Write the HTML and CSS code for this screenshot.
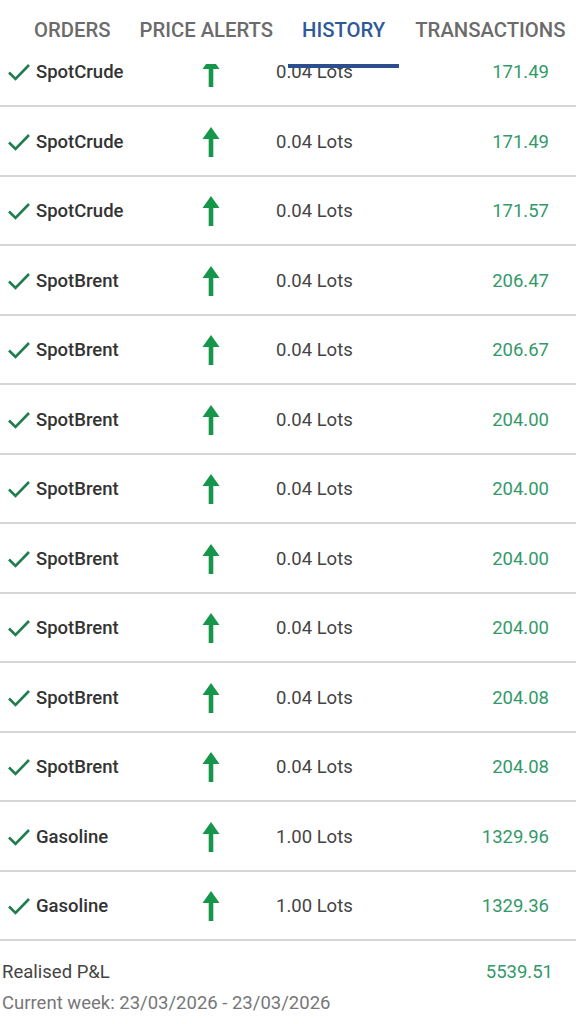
FILE: index.html
```html
<!DOCTYPE html>
<html lang="en">
<head>
    <meta charset="UTF-8">
    <meta name="viewport" content="width=device-width, initial-scale=1.0">
    <title>History</title>
    <link rel="stylesheet" href="styles.css">
</head>
<body>
    <!-- Abas -->
    <div class="tabs">
        <span class="edge"></span>
        <span class="tab">ORDERS</span>
        <span class="tab">PRICE ALERTS</span>
        <span class="tab active">HISTORY</span>
        <span class="tab">TRANSACTIONS</span>
        <span class="indicator"></span>
    </div>

    <!-- Lista de operações -->
    <div class="viewport">
        <div class="rows" id="rows"></div>
    </div>

    <div class="summary">
        <div class="summary-line">
            <span class="summary-label">Realised P&amp;L</span>
            <span class="price">5539.51</span>
        </div>
        <div class="period">Current week: 23/03/2026 - 23/03/2026</div>
    </div>

    <script>
        const trades = [
            ['SpotCrude', '0.04', '171.49'],
            ['SpotCrude', '0.04', '171.49'],
            ['SpotCrude', '0.04', '171.57'],
            ['SpotBrent', '0.04', '206.47'],
            ['SpotBrent', '0.04', '206.67'],
            ['SpotBrent', '0.04', '204.00'],
            ['SpotBrent', '0.04', '204.00'],
            ['SpotBrent', '0.04', '204.00'],
            ['SpotBrent', '0.04', '204.00'],
            ['SpotBrent', '0.04', '204.08'],
            ['SpotBrent', '0.04', '204.08'],
            ['Gasoline', '1.00', '1329.96'],
            ['Gasoline', '1.00', '1329.36']
        ];

        const check = '<svg class="check" viewBox="0 0 24 18" width="24" height="18"><path d="M2 9.5l6.5 6.5L22 2" fill="none" stroke="#1f7d4f" stroke-width="2.6"/></svg>';
        const arrow = '<svg class="arrow" viewBox="0 0 18 30" width="18" height="30"><path d="M9 0L17.5 12H11.3V30H6.7V12H0.5Z" fill="#16964a"/></svg>';

        document.getElementById('rows').innerHTML = trades.map(t => `
            <div class="row">
                <div class="name">${check}<span>${t[0]}</span></div>
                <div class="dir">${arrow}</div>
                <div class="lots">${t[1]} Lots</div>
                <div class="price">${t[2]}</div>
            </div>
        `).join('');
    </script>
</body>
</html>
```

FILE: styles.css
```css
body {
    font-family: Roboto, "Noto Sans", sans-serif;
    background-color: #fff;
    margin: 0;
    padding: 0;
    width: 576px;
    height: 1024px;
    overflow: hidden;
}
.tabs {
    position: relative;
    z-index: 2;
    height: 64px;
    background: #fff;
    display: flex;
    align-items: flex-start;
    padding-top: 17px;
    box-sizing: border-box;
}
.edge {
    width: 2px;
    height: 23px;
    margin-top: 1px;
    background: #bdbdbd;
    margin-right: 34px;
}
.tab {
    font-size: 20.3px;
    font-weight: 500;
    color: #6b6b6b;
    line-height: 26px;
    margin-right: 29px;
    white-space: nowrap;
}
.tab.active {
    color: #2f5a9a;
    margin-right: 30px;
}
.indicator {
    position: absolute;
    left: 288px;
    width: 111px;
    height: 4px;
    bottom: -4px;
    background: #2b4f8c;
}
.viewport {
    height: 878px;
    overflow: hidden;
}
.rows {
    margin-top: -26.5px;
}
.row {
    border-bottom: 2px solid #d6d6d6;
    display: flex;
    align-items: center;
    padding-top: 2px;
    height: 65.5px;
}
.name {
    width: 194px;
    display: flex;
    align-items: center;
    font-size: 18.5px;
    font-weight: 500;
    color: #333;
}
.check {
    margin-left: 7px;
    margin-right: 5px;
}
.dir {
    width: 82px;
    display: flex;
    padding-left: 8px;
    box-sizing: border-box;
}
.lots {
    font-size: 18.5px;
    color: #444;
    flex: 1;
}
.price {
    font-size: 18.5px;
    color: #34996a;
    margin-right: 27px;
}
.summary {
    padding: 18px 0 0 2px;
    color: #444;
}
.summary-line {
    display: flex;
    justify-content: space-between;
    font-size: 18.5px;
    line-height: 24px;
}
.summary-line .price {
    margin-right: 23px;
}
.period {
    font-size: 18.5px;
    line-height: 24px;
    margin-top: 7px;
    color: #777;
}
```
